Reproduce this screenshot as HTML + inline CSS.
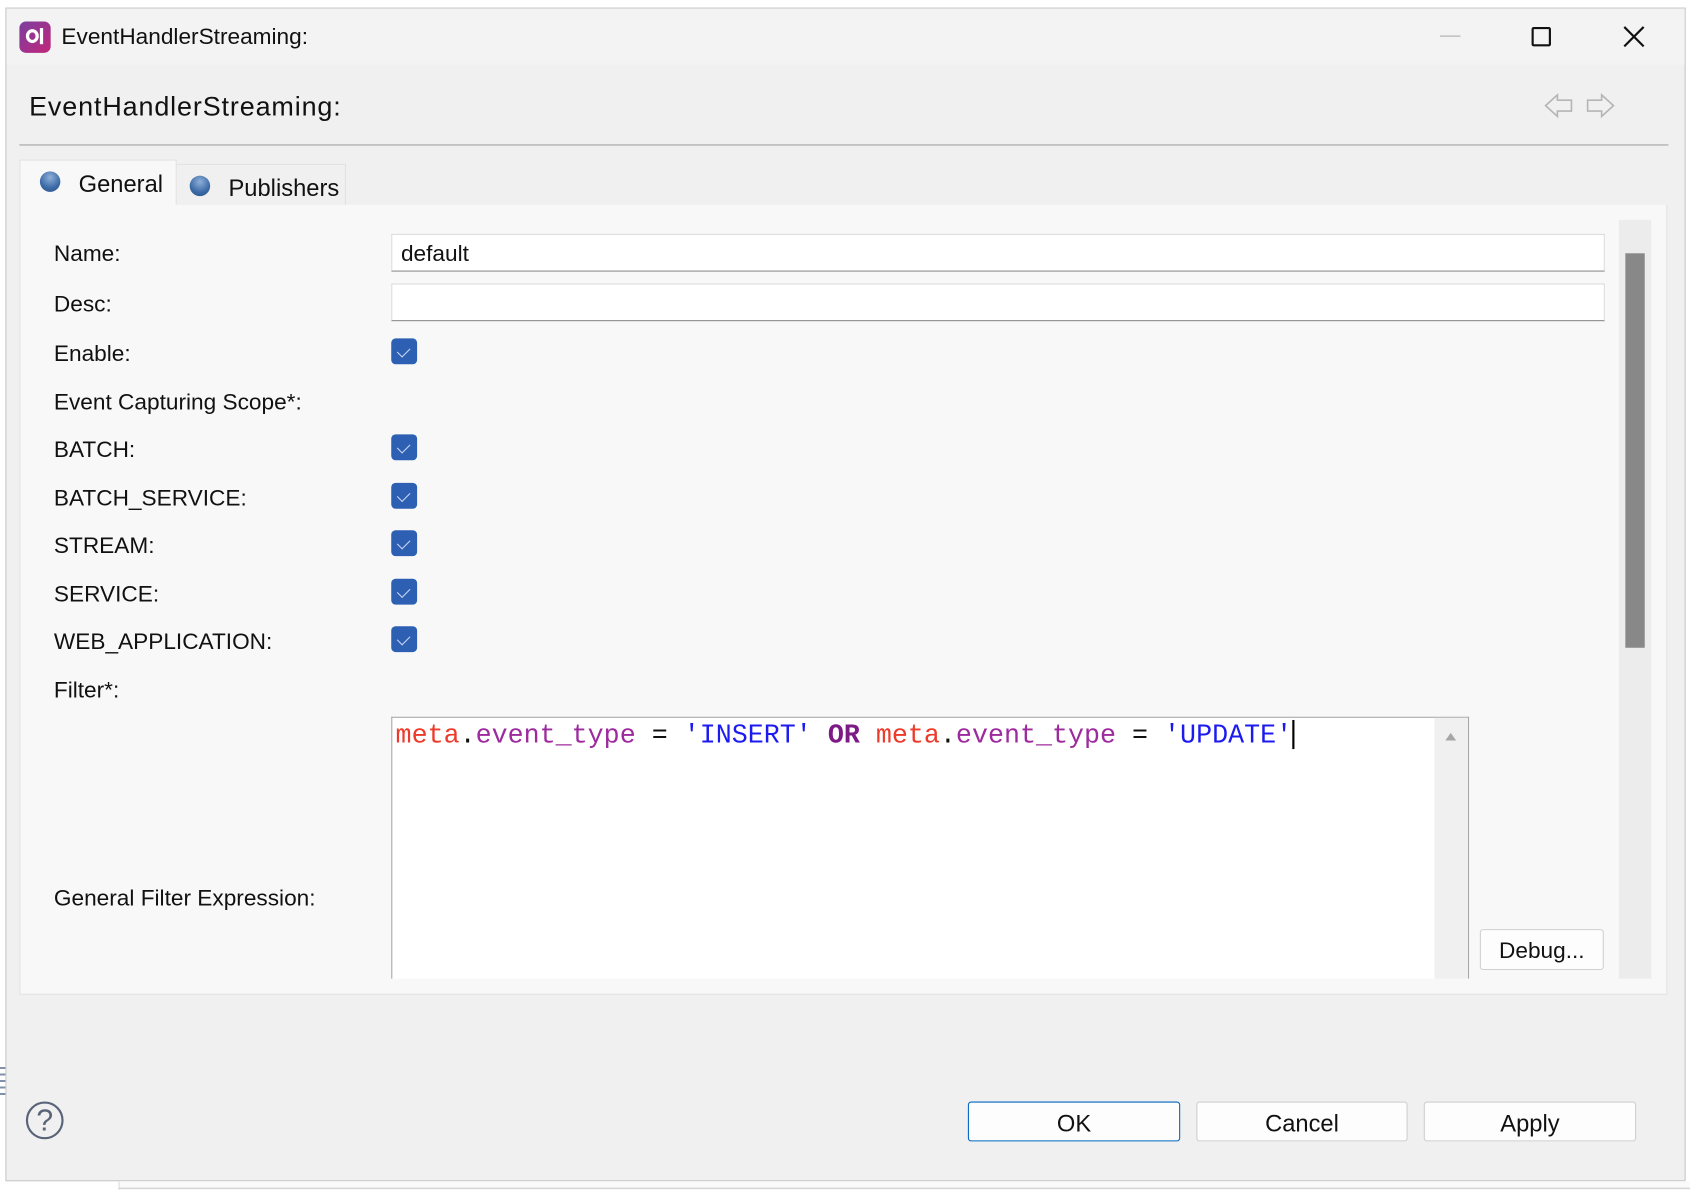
<!DOCTYPE html>
<html><head><meta charset="utf-8"><style>
*{margin:0;padding:0;box-sizing:border-box}
html,body{width:1690px;height:1190px;overflow:hidden;background:#fff}
#s{position:absolute;left:0;top:0;width:1568px;height:1104px;transform:scale(1.07781);transform-origin:0 0;font-family:"Liberation Sans",sans-serif;color:#111}
.a{position:absolute}
.lbl{position:absolute;left:50px;font-size:21px;line-height:24px;transform:translateY(-10px)}
.cb{position:absolute;left:363px;width:24px;height:24px;background:#2d5fb3;border-radius:4px}
.cb:after{content:"";position:absolute;left:8px;top:6px;width:6px;height:10px;border:solid #c9d6ee;border-width:0 1.5px 1.5px 0;transform:rotate(45deg)}
.inp{position:absolute;left:363px;width:1126px;height:35px;background:#fff;border:1px solid #dcdcdc;border-bottom:1px solid #8a8a8a;font-size:21px;padding:6px 8px}
.btn{position:absolute;top:1022px;height:37px;background:#fdfdfd;border:1px solid #cfcfcf;border-radius:3px;font-size:22px;text-align:center;line-height:37px}
.code{position:absolute;left:367px;top:667px;font-family:"Liberation Mono",monospace;font-size:24.75px;line-height:32px;white-space:pre}
.r{color:#ec3b2b}.p{color:#9d2b9d}.b{color:#1b1bf0}.o{color:#7c1a86;font-weight:bold}
</style></head><body><div id="s">
<div class="a" style="left:5px;top:7px;width:1559px;height:1089px;background:#f0f0f0;border:1px solid #c8c8c8"></div>
<div class="a" style="left:6px;top:8px;width:1557px;height:52px;background:#f3f3f3"></div>
<div class="a" style="left:18px;top:20px;width:29px;height:29px;border-radius:6px;background:linear-gradient(135deg,#7a3fa0,#c2267a)"></div>
<div class="a" style="left:24px;top:27px;width:12px;height:13px;border:3px solid #fff;border-radius:50%"></div>
<div class="a" style="left:37px;top:26px;width:3px;height:15px;background:#fff"></div>
<div class="a" style="left:57px;top:23px;font-size:21px">EventHandlerStreaming:</div>
<div class="a" style="left:1336px;top:33px;width:19px;height:1px;background:#aaa"></div>
<div class="a" style="left:1421px;top:25px;width:18px;height:18px;border:2px solid #111;border-radius:2px"></div>
<svg class="a" style="left:1504px;top:22px" width="24" height="24"><path d="M3 3L21 21M21 3L3 21" stroke="#111" stroke-width="2"/></svg>
<div class="a" style="left:27px;top:85px;font-size:25px;letter-spacing:0.8px">EventHandlerStreaming:</div>
<svg class="a" style="left:1430px;top:84px" width="72" height="28" fill="none" stroke="#b5b5b5" stroke-width="1.5"><path d="M4 14L15 4V9H28V19H15V24Z"/><path d="M67 14L56 4V9H43V19H56V24Z"/></svg>
<div class="a" style="left:18px;top:134px;width:1530px;height:1px;background:#a0a0a0"></div>
<div class="a" style="left:163px;top:152px;width:158px;height:39px;background:#f0f0f0;border:1px solid #e2e2e2"></div>
<div class="a" style="left:18px;top:148px;width:146px;height:44px;background:#f8f8f8;border:1px solid #e2e2e2;border-bottom:none"></div>
<div class="a" style="left:37px;top:159px;width:19px;height:19px;border-radius:50%;background:radial-gradient(circle at 50% 30%,#8fb0d8,#3b6aa6 60%,#2a4f85)"></div>
<div class="a" style="left:73px;top:158px;font-size:22px">General</div>
<div class="a" style="left:176px;top:163px;width:19px;height:19px;border-radius:50%;background:radial-gradient(circle at 50% 30%,#8fb0d8,#3b6aa6 60%,#2a4f85)"></div>
<div class="a" style="left:212px;top:162px;font-size:22px">Publishers</div>
<div class="a" style="left:18px;top:190px;width:1529px;height:733px;background:#f8f8f8;border:1px solid #e2e2e2;border-top:none"></div>
<div class="lbl" style="top:234px">Name:</div>
<div class="lbl" style="top:281px">Desc:</div>
<div class="lbl" style="top:327px">Enable:</div>
<div class="lbl" style="top:372px">Event Capturing Scope*:</div>
<div class="lbl" style="top:416px">BATCH:</div>
<div class="lbl" style="top:461px">BATCH_SERVICE:</div>
<div class="lbl" style="top:505px">STREAM:</div>
<div class="lbl" style="top:550px">SERVICE:</div>
<div class="lbl" style="top:594px">WEB_APPLICATION:</div>
<div class="lbl" style="top:639px">Filter*:</div>
<div class="lbl" style="top:832px">General Filter Expression:</div>
<div class="inp" style="top:217px">default</div>
<div class="inp" style="top:263px"></div>
<div class="cb" style="top:314px"></div>
<div class="cb" style="top:403px"></div>
<div class="cb" style="top:448px"></div>
<div class="cb" style="top:492px"></div>
<div class="cb" style="top:537px"></div>
<div class="cb" style="top:581px"></div>
<div class="a" style="left:1502px;top:204px;width:30px;height:704px;background:#ececec"></div>
<div class="a" style="left:1508px;top:235px;width:18px;height:366px;background:#888"></div>
<div class="a" style="left:363px;top:665px;width:1000px;height:243px;background:#fff;border:1px solid #a8a8a8;border-bottom:none"></div>
<div class="a" style="left:1331px;top:666px;width:31px;height:242px;background:#f0f0f0"></div>
<svg class="a" style="left:1340px;top:679px" width="12" height="10"><path d="M6 1L11 8H1Z" fill="#a6a6a6"/></svg>
<div class="code"><span class="r">meta</span>.<span class="p">event_type</span> = <span class="b">'INSERT'</span> <span class="o">OR</span> <span class="r">meta</span>.<span class="p">event_type</span> = <span class="b">'UPDATE'</span></div>
<div class="a" style="left:1199px;top:668px;width:1.5px;height:27px;background:#000"></div>
<div class="a" style="left:1373px;top:862px;width:115px;height:38px;background:#fdfdfd;border:1px solid #d0d0d0;border-radius:3px;font-size:21px;text-align:center;line-height:40px">Debug...</div>
<div class="a" style="left:24px;top:1022px;width:35px;height:35px;border-radius:50%;border:2px solid #5a6478;color:#5a6478;font-size:28px;text-align:center;line-height:32px">?</div>
<div class="btn" style="left:898px;width:197px;border-color:#0067c0;line-height:39px">OK</div>
<div class="btn" style="left:1110px;width:196px;line-height:39px">Cancel</div>
<div class="btn" style="left:1321px;width:197px;line-height:39px">Apply</div>
<div class="a" style="left:0;top:990px;width:5px;height:30px;background:repeating-linear-gradient(#8090a8 0 2px,transparent 2px 6px)"></div>
<div class="a" style="left:110px;top:1096px;width:1458px;height:8px;background:#fafafa;border-left:1px solid #ddd"></div>
<div class="a" style="left:110px;top:1102px;width:1458px;height:1px;background:#ccc"></div>
</div></body></html>
